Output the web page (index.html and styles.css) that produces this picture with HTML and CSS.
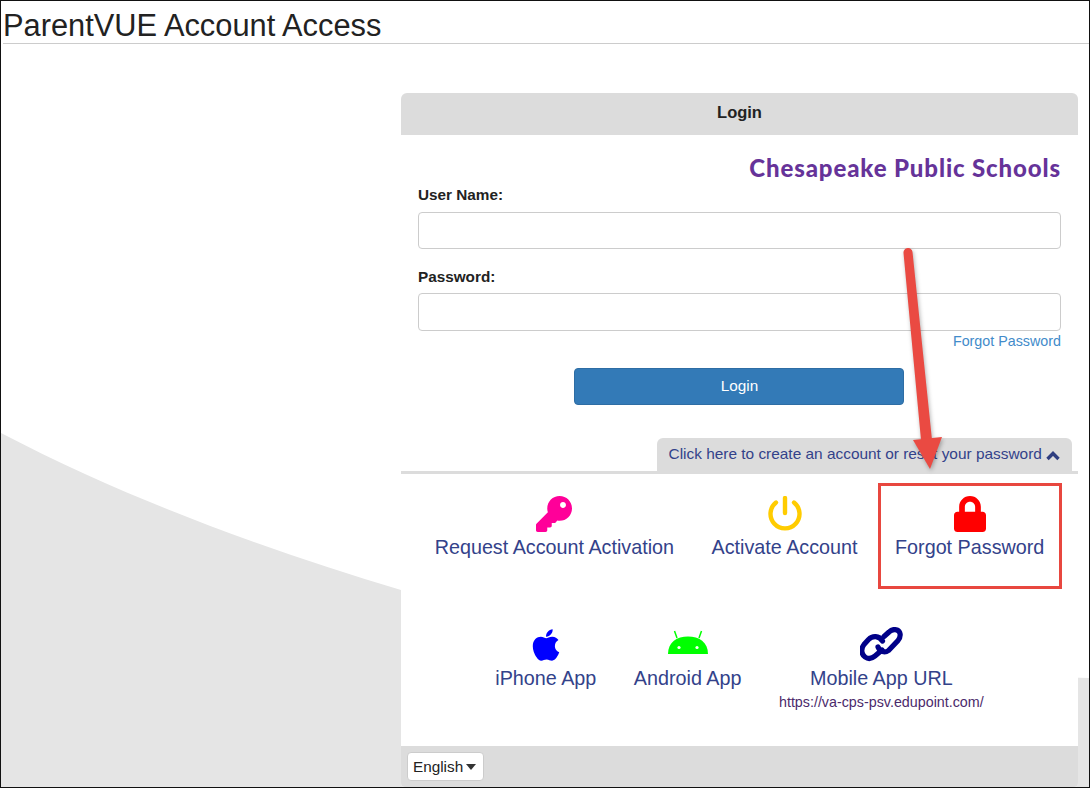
FILE: index.html
```html
<!DOCTYPE html>
<html lang="en">
<head>
<meta charset="utf-8">
<title>ParentVUE Account Access</title>
<link rel="stylesheet" href="styles.css">
</head>
<body>
<div class="screen">
  <svg class="backdrop" viewBox="0 0 1088 786" preserveAspectRatio="none" aria-hidden="true">
    <path d="M0 432 C130 500 270 550 400 589 C620 650 850 670 1088 677 V786 H0 Z" fill="#e5e5e5"/>
  </svg>
  <h1 class="page-title">ParentVUE Account Access</h1>
  <main class="panel">
    <div class="panel-head">Login</div>
    <form class="login">
      <div class="school">Chesapeake Public Schools</div>
      <label class="field-label user">User Name:</label>
      <div class="input"></div>
      <label class="field-label pass">Password:</label>
      <div class="input pass-input"></div>
      <a class="forgot">Forgot Password</a>
      <button class="btn" type="button">Login</button>
    </form>
    <div class="tab-row">
      <div class="tab">Click here to create an account or reset your password
        <svg class="chev" viewBox="0 0 14 10"><path d="M1.5 8 7 2.5 12.5 8" fill="none" stroke="#2f3e80" stroke-width="3.400"/></svg>
      </div>
    </div>
    <div class="links one">
      <a class="link">
        <svg class="ico" width="36" height="36" viewBox="0 0 512 512"><path fill="#ff0099" d="M512 176.001C512 273.203 433.202 352 336 352c-11.22 0-22.19-1.062-32.827-3.069l-24.012 27.014A23.999 23.999 0 0 1 261.223 384H224v40c0 13.255-10.745 24-24 24h-40v40c0 13.255-10.745 24-24 24H24c-13.255 0-24-10.745-24-24v-78.059c0-6.365 2.529-12.47 7.029-16.971l161.802-161.802C163.108 213.814 160 195.271 160 176 160 78.798 238.797.001 335.999 0 433.488-.001 512 78.511 512 176.001zM342 128c0 23 19 42 42 42s42-19 42-42-19-42-42-42-42 19-42 42z"/></svg>
        <span>Request Account Activation</span>
      </a>
      <a class="link">
        <svg class="ico" width="36" height="36" viewBox="0 0 36 36"><path d="M9 6.500a14.500 14.500 0 1 0 18 0" fill="none" stroke="#ffcc00" stroke-width="4.400" stroke-linecap="round"/><path d="M18 2v15" stroke="#ffcc00" stroke-width="4.400" stroke-linecap="round"/></svg>
        <span>Activate Account</span>
      </a>
      <a class="link">
        <svg class="ico" width="32" height="36" viewBox="0 0 448 512" preserveAspectRatio="none"><path fill="#ff0000" d="M400 224h-24v-72C376 68.2 307.8 0 224 0S72 68.2 72 152v72H48c-26.5 0-48 21.5-48 48v192c0 26.5 21.5 48 48 48h352c26.5 0 48-21.5 48-48V272c0-26.5-21.5-48-48-48zm-104 0H152v-72c0-39.7 32.3-72 72-72s72 32.3 72 72v72z"/></svg>
        <span>Forgot Password</span>
      </a>
    </div>
    <div class="links two">
      <a class="link">
        <svg class="ico" width="28" height="36" viewBox="0 0 384 512"><path fill="#0000ff" d="M318.7 268.7c-.2-36.7 16.4-64.4 50-84.8-18.8-26.9-47.2-41.7-84.7-44.6-35.5-2.8-74.3 20.7-88.5 20.7-15 0-49.4-19.7-76.4-19.7C63.3 141.2 4 184.8 4 273.5q0 39.3 14.4 81.2c12.8 36.7 59 126.7 107.2 125.2 25.2-.6 43-17.9 75.8-17.9 31.8 0 48.3 17.9 76.4 17.9 48.6-.7 90.4-82.5 102.6-119.3-65.2-30.7-61.7-90-61.7-91.9zm-56.6-164.2c27.3-32.4 24.8-61.9 24-72.5-24.1 1.4-52 16.4-67.9 34.9-17.5 19.8-27.8 44.3-25.6 71.9 26.1 2 49.9-11.4 69.5-34.3z"/></svg>
        <span>iPhone App</span>
      </a>
      <a class="link">
        <svg class="ico" width="40" height="36" viewBox="0 0 40 36"><path d="M0 27C0 15 9 9.500 20 9.500S40 15 40 27Z" fill="#00ff00"/><path d="M9 11 6.500 4M31 11l2.500-7" stroke="#00ff00" stroke-width="1.500"/><circle cx="11" cy="20.500" r="1.600" fill="#fff"/><circle cx="29" cy="20.500" r="1.600" fill="#fff"/></svg>
        <span>Android App</span>
      </a>
      <a class="link">
        <svg class="ico" width="43" height="36" viewBox="0 0 43 36"><g fill="none" stroke="#000088" stroke-width="5.200" stroke-linecap="round"><path d="M22.500 14C19 8.500 12.500 8.500 8.500 12.500L4 17.500C.5 22 1.500 27.500 5 30C8.500 32.500 12 31.500 15 29L22 23"/><path d="M18 20C20 25 25 26 28.500 23.500L38 13.500C41.500 9 40.500 4.500 37 3C34 2 31 3 29 5L24 9.500"/></g></svg>
        <span>Mobile App URL</span>
        <small>https://va-cps-psv.edupoint.com/</small>
      </a>
    </div>
    <div class="panel-foot">
      <div class="lang">English <i class="caret"></i></div>
    </div>
  </main>
  <div class="highlight"></div>
  <svg class="arrow" width="60" height="230" viewBox="0 0 60 230" aria-hidden="true">
    <path d="M4.500 5A4.500 4.500 0 0 1 13.500 4L33 192H22Z" fill="#ea4a42"/>
    <path d="M14 192 43 189 31 221Z" fill="#ea4a42"/>
  </svg>
</div>
</body>
</html>
```

FILE: styles.css
```css
* { box-sizing: border-box; }
html, body { margin: 0; padding: 0; background: #fff; }
body { font-family: "Liberation Sans", Arial, sans-serif; color: #222; }
.screen {
  position: relative;
  width: 1090px;
  height: 788px;
  border: 1px solid #111;
  display: flex;
  flex-direction: column;
  overflow: hidden;
}
.backdrop { position: absolute; left: 0; top: 0; width: 1088px; height: 786px; }
.page-title {
  position: relative;
  margin: 0 0 0 2px;
  height: 43px;
  padding-top: 7px;
  font-size: 30.8px;
  line-height: 35px;
  font-weight: 400;
  color: #222;
  border-bottom: 1px solid #ccc;
  white-space: nowrap;
}
.panel {
  position: relative;
  margin: 49px 0 0 400px;
  width: 677px;
  flex: 1;
  background: #fff;
  border-radius: 6px 6px 4px 4px;
  display: flex;
  flex-direction: column;
}
.panel-head {
  height: 42px;
  background: #dcdcdc;
  border-radius: 6px 6px 0 0;
  text-align: center;
  font-weight: 700;
  font-size: 16.5px;
  line-height: 39px;
  color: #222;
}
.login { display: flex; flex-direction: column; padding: 0 17px; height: 303px; }
.school {
  margin-top: 19px;
  text-align: right;
  font-family: Lato, sans-serif;
  font-weight: 900;
  font-size: 24px;
  line-height: 28px;
  letter-spacing: .87px;
  color: #663399;
}
.field-label { display: block; font-weight: 700; font-size: 15.3px; line-height: 18px; color: #222; }
.user { margin-top: 4px; }
.pass { margin-top: 19px; }
.input { height: 37px; margin-top: 8px; background: #fff; border: 1px solid #ccc; border-radius: 4px; }
.pass-input { height: 38px; margin-top: 7px; }
.forgot { margin-top: 2px; text-align: right; font-size: 14.3px; line-height: 17px; color: #428bca; }
.btn {
  align-self: center;
  width: 330px;
  height: 37px;
  margin: 18px 2px 0 0;
  padding: 0 0 2px 2px;
  background: #337ab7;
  border: 1px solid #2e6da4;
  border-radius: 4px;
  color: #fff;
  font: 15.3px "Liberation Sans", Arial, sans-serif;
}
.tab-row { height: 36px; border-bottom: 3px solid #dcdcdc; display: flex; justify-content: flex-end; padding-right: 6px; }
.tab {
  width: 415px;
  height: 34px;
  padding: 0 0 3px 11.500px;
  background: #dcdcdc;
  border-radius: 6px 6px 0 0;
  font-size: 15.42px;
  line-height: 31px;
  color: #33428a;
  white-space: nowrap;
  display: flex;
  gap: 4px;
  align-items: center;
}
.chev { width: 14px; height: 10px; margin-top: 5px; }
.links { display: flex; justify-content: center; gap: 37.5px; }
.one { margin-top: 22px; height: 131px; }
.two { height: 119px; }
.link { display: flex; flex-direction: column; align-items: center; color: #33428a; font-size: 19.75px; line-height: 24px; white-space: nowrap; }
.ico { display: block; margin-bottom: 3px; }
.link small { font-size: 14.3px; line-height: 18px; margin-top: 3px; color: #4b2a6b; }
.panel-foot { flex: 1; background: #dcdcdc; border-radius: 0 0 4px 4px; padding: 6px; }
.lang {
  width: 77px;
  height: 29px;
  background: #fff;
  border: 1px solid #ccc;
  border-radius: 4px;
  font-size: 15.3px;
  line-height: 28px;
  padding-left: 5px;
  color: #222;
}
.caret { display: inline-block; border: 5.5px solid transparent; border-top: 6px solid #333; border-bottom: 0; vertical-align: 2px; margin-left: -1px; }
.highlight { position: absolute; left: 877px; top: 482px; width: 184px; height: 106px; border: 3px solid #e8473f; }
.arrow { position: absolute; left: 898px; top: 247px; filter: drop-shadow(1px 2px 2px rgba(0,0,0,.3)); }
```
